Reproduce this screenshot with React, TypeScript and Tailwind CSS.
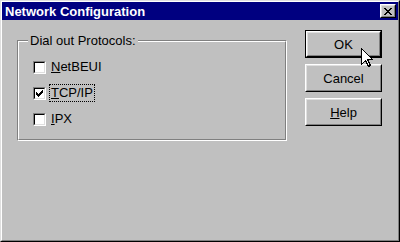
import React from "react";

const font = { fontFamily: '"Liberation Sans", Arial, sans-serif' };

function Check() {
  const cols = [2, 3, 4, 3, 2, 1, 0];
  return (
    <svg width="7" height="7" viewBox="0 0 7 7" shapeRendering="crispEdges">
      {cols.map((y, x) => (
        <rect key={x} x={x} y={y} width="1" height="3" fill="#000" />
      ))}
    </svg>
  );
}

function CheckBox({ checked }: { checked?: boolean }) {
  return (
    <div className="w-[13px] h-[13px] shrink-0 border border-t-[#808080] border-l-[#808080] border-b-white border-r-white">
      <div className="w-full h-full bg-white border border-t-black border-l-black border-b-[#dfdfdf] border-r-[#dfdfdf] flex items-center justify-center">
        {checked ? <Check /> : null}
      </div>
    </div>
  );
}

function Row({
  checked,
  focus,
  u,
  rest,
}: {
  checked?: boolean;
  focus?: boolean;
  u: string;
  rest: string;
}) {
  return (
    <div className="h-[26px] flex items-start">
      <div className="pt-0">
        <CheckBox checked={checked} />
      </div>
      <span
        className={
          "ml-[3px] -mt-[3px] px-[1px] py-[1px] leading-[14px] text-[13px] text-black border " +
          (focus ? "border-dotted border-black" : "border-transparent")
        }
      >
        <span className="underline">{u}</span>
        {rest}
      </span>
    </div>
  );
}

function Button({
  children,
  def,
}: {
  children: React.ReactNode;
  def?: boolean;
}) {
  const inner = (
    <div className="w-full h-full border border-t-white border-l-white border-b-black border-r-black">
      <div className="w-full h-full border border-t-[#dfdfdf] border-l-[#dfdfdf] border-b-[#808080] border-r-[#808080] flex items-center justify-center text-[13px] text-black leading-none">
        {children}
      </div>
    </div>
  );
  return (
    <div className={"h-[28px] w-[77px] " + (def ? "border border-black" : "")}>
      {inner}
    </div>
  );
}

export default function App() {
  return (
    <div className="relative w-[400px] h-[242px] bg-[#c0c0c0]" style={font}>
      <div className="w-full h-full border border-t-[#dfdfdf] border-l-[#dfdfdf] border-b-black border-r-black">
        <div className="w-full h-full border border-t-white border-l-white border-b-[#808080] border-r-[#808080] flex flex-col">
          {/* title bar */}
          <div className="h-[18px] bg-[#000080] flex items-center pl-[3px] pr-[2px]">
            <span className="text-white font-bold text-[13px] leading-none">
              Network Configuration
            </span>
            <div className="ml-auto w-[16px] h-[14px] border border-t-white border-l-white border-b-black border-r-black bg-[#c0c0c0]">
              <div className="w-full h-full border border-t-[#dfdfdf] border-l-[#dfdfdf] border-b-[#808080] border-r-[#808080] flex items-center justify-center">
                <svg width="8" height="7" viewBox="0 0 8 7" shapeRendering="crispEdges">
                  <path
                    d="M0 0h2v1h-2zM6 0h2v1h-2zM1 1h2v1h-2zM5 1h2v1h-2zM2 2h4v1h-4zM3 3h2v1h-2zM2 4h4v1h-4zM1 5h2v1h-2zM5 5h2v1h-2zM0 6h2v1h-2zM6 6h2v1h-2z"
                    fill="#000"
                  />
                </svg>
              </div>
            </div>
          </div>
          {/* body */}
          <div className="flex pl-[15px] pt-[10px]">
            <div className="relative mt-[10px] w-[270px] h-[101px] border border-t-[#808080] border-l-[#808080] border-b-white border-r-white">
              <div className="w-full h-full border border-t-white border-l-white border-b-[#808080] border-r-[#808080] pl-[14px] pt-[19px]">
                <Row u="N" rest="etBEUI" />
                <Row u="T" rest="CP/IP" checked focus />
                <Row u="I" rest="PX" />
              </div>
              <span className="absolute left-[10px] -top-[8px] bg-[#c0c0c0] px-[2px] text-[13px] leading-[15px] text-black">
                Dial out Protocols:
              </span>
            </div>
            <div className="ml-[18px] flex flex-col gap-[6px]">
              <Button def>OK</Button>
              <Button>Cancel</Button>
              <Button>
                <span>
                  <span className="underline">H</span>elp
                </span>
              </Button>
            </div>
          </div>
        </div>
      </div>
      {/* mouse cursor */}
      <svg
        className="absolute left-[361px] top-[48px]"
        width="13"
        height="21"
        viewBox="0 0 13 21"
        shapeRendering="crispEdges"
      >
        <path
          d="M0.5 0.5 L0.5 16.5 L4.5 12.5 L7.5 18.5 L9.5 17.5 L6.5 11.5 L11.5 11.5 Z"
          fill="#fff"
          stroke="#000"
          strokeWidth="1"
          strokeLinejoin="miter"
        />
      </svg>
    </div>
  );
}
